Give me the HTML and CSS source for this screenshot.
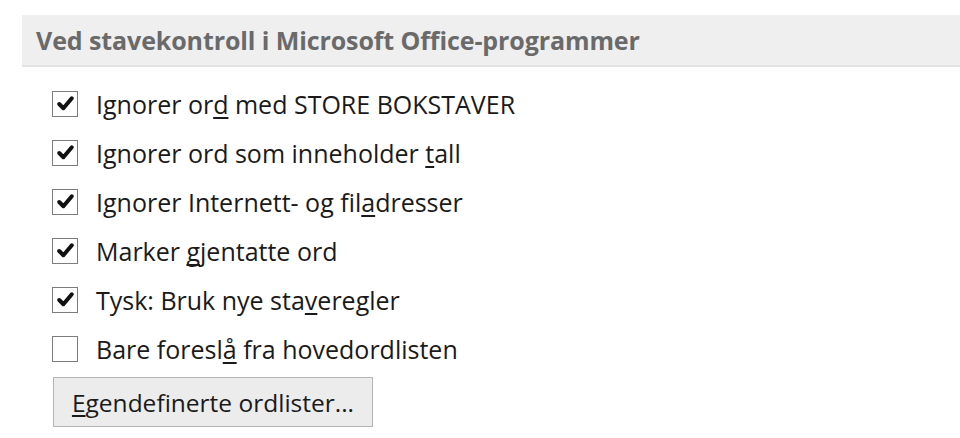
FILE: index.html
```html
<!DOCTYPE html>
<html lang="no">
<head>
<meta charset="utf-8">
<title>Stavekontroll</title>
<link rel="stylesheet" href="styles.css">
</head>
<body>
<div class="section-header">Ved stavekontroll i Microsoft Office-programmer</div>
<ul class="options">
  <li class="option"><span class="box checked"><svg viewBox="0 0 20 20"><path d="M4 10.5 L8 14.5 L16 5"/></svg></span><span class="label">Ignorer or<u>d</u> med STORE BOKSTAVER</span></li>
  <li class="option"><span class="box checked"><svg viewBox="0 0 20 20"><path d="M4 10.5 L8 14.5 L16 5"/></svg></span><span class="label">Ignorer ord som inneholder <u>t</u>all</span></li>
  <li class="option"><span class="box checked"><svg viewBox="0 0 20 20"><path d="M4 10.5 L8 14.5 L16 5"/></svg></span><span class="label">Ignorer Internett- og fil<u>a</u>dresser</span></li>
  <li class="option"><span class="box checked"><svg viewBox="0 0 20 20"><path d="M4 10.5 L8 14.5 L16 5"/></svg></span><span class="label">Marker <u>g</u>jentatte ord</span></li>
  <li class="option"><span class="box checked"><svg viewBox="0 0 20 20"><path d="M4 10.5 L8 14.5 L16 5"/></svg></span><span class="label">Tysk: Bruk nye sta<u>v</u>eregler</span></li>
  <li class="option"><span class="box"></span><span class="label">Bare foresl<u>å</u> fra hovedordlisten</span></li>
</ul>
<button class="btn" type="button"><u>E</u>gendefinerte ordlister...</button>
</body>
</html>
```
FILE: styles.css
```css
html, body {
  margin: 0;
  padding: 0;
  background: #ffffff;
}
body {
  font-family: "Open Sans", "Noto Sans", "Liberation Sans", sans-serif;
  color: #1e1e1e;
  padding-top: 15px;
}
.section-header {
  margin-left: 22px;
  height: 52px;
  box-sizing: border-box;
  display: flex;
  align-items: center;
  padding-left: 14px;
  background: #efefef;
  border-bottom: 2px solid #e3e3e3;
  font-size: 25px;
  font-weight: 700;
  color: #6a6a6a;
  letter-spacing: -0.1px;
}
.options {
  list-style: none;
  margin: 12px 0 0 0;
  padding: 0 0 0 52px;
}
.option {
  height: 49px;
  display: flex;
  align-items: center;
  gap: 18px;
}
.box {
  width: 26px;
  height: 26px;
  box-sizing: border-box;
  border: 1.5px solid #7c7c7c;
  background: #fff;
  display: flex;
  align-items: center;
  justify-content: center;
}
.box svg {
  width: 21px;
  height: 21px;
}
.box svg path {
  fill: none;
  stroke: #111;
  stroke-width: 3.8;
  stroke-linecap: round;
  stroke-linejoin: round;
}
.label {
  font-size: 25px;
  color: #1a1a1a;
}
.label u, .btn u {
  text-underline-offset: 3px;
  text-decoration-thickness: 1.5px;
  text-decoration-skip-ink: none;
}
.btn {
  margin: 4px 0 0 53px;
  width: 320px;
  height: 50px;
  box-sizing: border-box;
  border: 1.5px solid #b4b4b4;
  background: #ececec;
  font-family: "Open Sans", "Noto Sans", "Liberation Sans", sans-serif;
  font-size: 24.5px;
  color: #1a1a1a;
  padding: 0;
  display: block;
}
```
